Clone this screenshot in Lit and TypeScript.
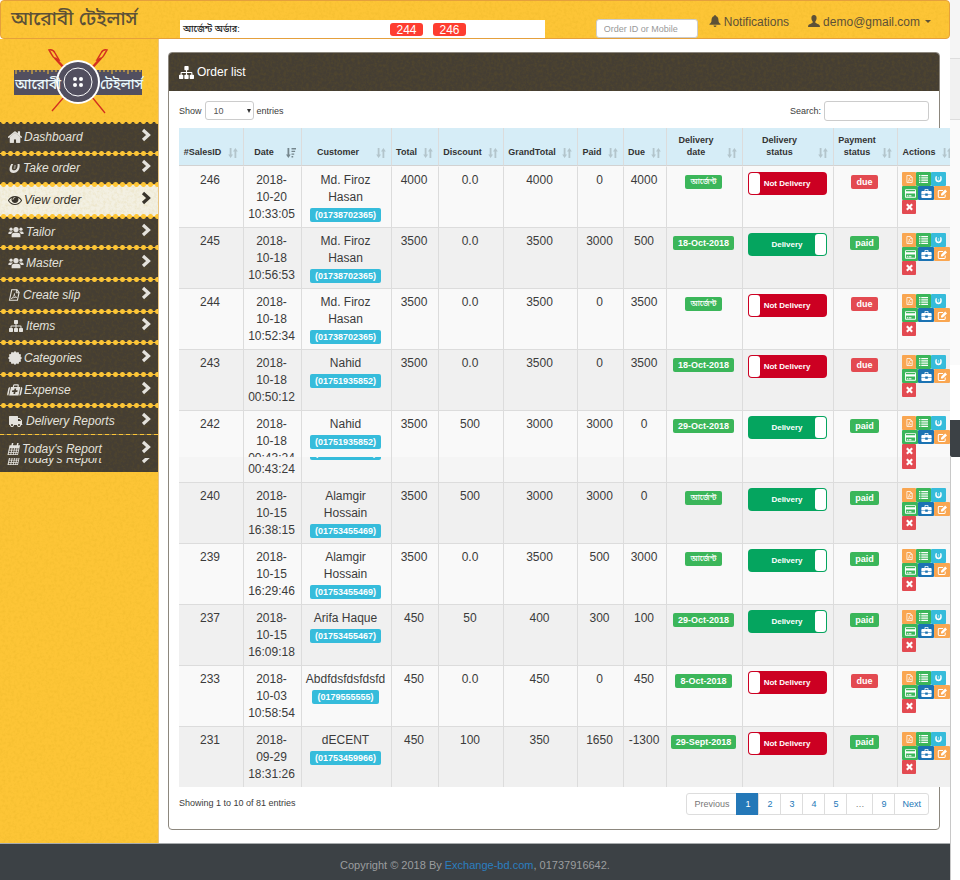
import { LitElement, html, svg, css, nothing } from "lit";
import type { TemplateResult } from "lit";
import { customElement } from "lit/decorators.js";
import { classMap } from "lit/directives/class-map.js";

interface Order {
  id: number;
  date: string[];
  name: string;
  phone: string;
  total: string;
  discount: string;
  grand: string;
  paid: string;
  due: string;
  delivery: string;
  delivered: boolean;
  settled: boolean;
  split?: boolean;
}

const URGENT = "আর্জেন্ট";

const ORDERS: Order[] = [
  { id: 246, date: ["2018-", "10-20", "10:33:05"], name: "Md. Firoz Hasan", phone: "01738702365", total: "4000", discount: "0.0", grand: "4000", paid: "0", due: "4000", delivery: URGENT, delivered: false, settled: false },
  { id: 245, date: ["2018-", "10-18", "10:56:53"], name: "Md. Firoz Hasan", phone: "01738702365", total: "3500", discount: "0.0", grand: "3500", paid: "3000", due: "500", delivery: "18-Oct-2018", delivered: true, settled: true },
  { id: 244, date: ["2018-", "10-18", "10:52:34"], name: "Md. Firoz Hasan", phone: "01738702365", total: "3500", discount: "0.0", grand: "3500", paid: "0", due: "3500", delivery: URGENT, delivered: false, settled: false },
  { id: 243, date: ["2018-", "10-18", "00:50:12"], name: "Nahid", phone: "01751935852", total: "3500", discount: "0.0", grand: "3500", paid: "0", due: "3500", delivery: "18-Oct-2018", delivered: false, settled: false },
  { id: 242, date: ["2018-", "10-18", "00:43:24"], name: "Nahid", phone: "01751935852", total: "3500", discount: "500", grand: "3000", paid: "3000", due: "0", delivery: "29-Oct-2018", delivered: true, settled: true, split: true },
  { id: 240, date: ["2018-", "10-15", "16:38:15"], name: "Alamgir Hossain", phone: "01753455469", total: "3500", discount: "500", grand: "3000", paid: "3000", due: "0", delivery: URGENT, delivered: true, settled: true },
  { id: 239, date: ["2018-", "10-15", "16:29:46"], name: "Alamgir Hossain", phone: "01753455469", total: "3500", discount: "0.0", grand: "3500", paid: "500", due: "3000", delivery: URGENT, delivered: true, settled: true },
  { id: 237, date: ["2018-", "10-15", "16:09:18"], name: "Arifa Haque", phone: "01753455467", total: "450", discount: "50", grand: "400", paid: "300", due: "100", delivery: "29-Oct-2018", delivered: true, settled: true },
  { id: 233, date: ["2018-", "10-03", "10:58:54"], name: "Abdfdsfdsfdsfd", phone: "0179555555", total: "450", discount: "0.0", grand: "450", paid: "0", due: "450", delivery: "8-Oct-2018", delivered: false, settled: false },
  { id: 231, date: ["2018-", "09-29", "18:31:26"], name: "dECENT", phone: "01753459966", total: "450", discount: "100", grand: "350", paid: "1650", due: "-1300", delivery: "29-Sept-2018", delivered: false, settled: true },
];

const COLUMNS: [string, number][] = [
  ["#SalesID", 64], ["Date", 58], ["Customer", 90], ["Total", 47], ["Discount", 65], ["GrandTotal", 74],
  ["Paid", 46], ["Due", 43], ["Delivery date", 76], ["Delivery status", 91], ["Payment status", 64], ["Actions", 60],
];

const scallop = (): string => {
  const pts: string[] = [];
  for (let i = 0; i < 24; i++) {
    const r = i % 2 ? 6.6 : 8;
    const a = (Math.PI * i) / 12;
    pts.push(`${(8 + r * Math.cos(a)).toFixed(2)},${(8 + r * Math.sin(a)).toFixed(2)}`);
  }
  return pts.join(" ");
};

const ICONS: Record<string, { box: string; body: TemplateResult }> = {
  home: { box: "100 100 1592 1592", body: svg`<path d="M1472 992v480q0 26-19 45t-45 19h-384v-384h-256v384h-384q-26 0-45-19t-19-45v-480q0-1 .5-3t.5-3l575-474 575 474q1 2 1 6zm223-69l-62 74q-8 9-21 11h-3q-13 0-21-7l-692-577-692 577q-12 8-24 7-13-2-21-11l-62-74q-8-10-7-23.500t11-21.500l719-599q32-26 76-26t76 26l244 204v-195q0-14 9-23t23-9h192q14 0 23 9t9 23v408l219 182q10 8 11 21.500t-7 23.500z"/><path d="M896 420L300 900v640h450v-400h292v400h450V900z"/>` },
  eye: { box: "0 0 1792 1792", body: svg`<path d="M1664 960q-152-236-381-353 61 104 61 225 0 185-131.500 316.500t-316.500 131.500-316.500-131.500-131.500-316.500q0-121 61-225-229 117-381 353 133 205 333.500 326.500t434.500 121.500 434.500-121.500 333.500-326.500zm-720-384q0-20-14-34t-34-14q-125 0-214.500 89.500t-89.500 214.500q0 20 14 34t34 14 34-14 14-34q0-86 61-147t147-61q20 0 34-14t14-34zm848 384q0 34-20 69-140 230-376.500 368.500t-499.500 138.500-499.500-139-376.500-368q-20-35-20-69t20-69q140-229 376.500-368t499.500-139 499.500 139 376.500 368q20 35 20 69z"/>` },
  users: { box: "0 0 20 16", body: svg`<circle cx="10" cy="5" r="3.300"/><circle cx="3.800" cy="4.500" r="2"/><circle cx="16.200" cy="4.500" r="2"/><path d="M4.500 14.500v-2Q4.500 9 8 9h4q3.500 0 3.500 3.500v2zM.5 10.500V9.300Q.5 7.300 2.500 7.300h2.600q.8 0 1.300.5-2.100 1-2.500 2.700zM19.500 10.500V9.300q0-2-2-2h-2.600q-.8 0-1.300.5 2.100 1 2.500 2.700z"/>` },
  sitemap: { box: "0 0 1792 1792", body: svg`<path d="M1792 1248v320q0 40-28 68t-68 28h-320q-40 0-68-28t-28-68v-320q0-40 28-68t68-28h96v-192h-512v192h96q40 0 68 28t28 68v320q0 40-28 68t-68 28h-320q-40 0-68-28t-28-68v-320q0-40 28-68t68-28h96v-192h-512v192h96q40 0 68 28t28 68v320q0 40-28 68t-68 28h-320q-40 0-68-28t-28-68v-320q0-40 28-68t68-28h96v-192q0-52 38-90t90-38h512v-192h-96q-40 0-68-28t-28-68v-320q0-40 28-68t68-28h320q40 0 68 28t28 68v320q0 40-28 68t-68 28h-96v192h512q52 0 90 38t38 90v192h96q40 0 68 28t28 68z"/>` },
  truck: { box: "0 0 1792 1792", body: svg`<path transform="translate(1792 0) scale(-1 1)" d="M640 1408q0-52-38-90t-90-38-90 38-38 90 38 90 90 38 90-38 38-90zm-384-512h384v-256h-158q-13 0-22 9l-195 195q-9 9-9 22v30zm1280 512q0-52-38-90t-90-38-90 38-38 90 38 90 90 38 90-38 38-90zm256-1088v1024q0 15-4 26.500t-13.500 18.500-16.500 11.500-23.500 6-22.500 2-25.500 0-22.500-.5q0 106-75 181t-181 75-181-75-75-181h-384q0 106-75 181t-181 75-181-75-75-181h-64q-3 0-22.500.5t-25.500 0-22.500-2-23.500-6-16.500-11.500-13.500-18.500-4-26.500q0-26 19-45t45-19v-320q0-8-.5-35t0-38 2.500-34.500 6.500-37 14-30.500 22.500-30l198-198q19-19 50.500-32t58.500-13h160v-192q0-26 19-45t45-19h1024q26 0 45 19t19 45z"/>` },
  horseshoe: { box: "0 0 16 16", body: svg`<path d="M2.500 2.500h2.600C3.800 6 4 11 8 11s4.200-5 2.900-8.500h2.600C16 8.500 14 14.500 8 14.500S0 8.500 2.500 2.500z"/><path d="M6.800 4h2.400v5.200H6.800z" opacity=".45"/>` },
  pdf: { box: "0 0 14 16", body: svg`<path d="M1.800 1h7l3.600 3.600V15H1.800z" fill="none" stroke="currentColor" stroke-width="1.500"/><path d="M8.500 1v4h4" fill="none" stroke="currentColor" stroke-width="1.200"/><path d="M3.600 12.800C5.500 11.500 7 8.500 6.500 6c.3 3 2 5 4.200 5.200-2.500-.3-5 .4-7.100 1.600z" fill="none" stroke="currentColor"/>` },
  badge: { box: "0 0 16 16", body: svg`<polygon points=${scallop()} />` },
  medkit: { box: "0 0 18 16", body: svg`<path d="M6 4V2.500Q6 1.500 7 1.500h4q1 0 1 1V4" fill="none" stroke="currentColor" stroke-width="1.500"/><path d="M0 6q0-2 2-2v11q-2 0-2-2zM18 6q0-2-2-2v11q2 0 2-2z"/><path fill-rule="evenodd" d="M3 4h12v11H3zM8 6v2.300H5.700v2.400H8V13h2.200v-2.300h2.300V8.300h-2.300V6z"/>` },
  calendar: { box: "0 0 16 16", body: svg`<path fill-rule="evenodd" d="M1 3h14v13H1zM2.400 7v2h2.200V7zm3.400 0v2H8V7zm3.300 0v2h2V7zm3.200 0v2h1.600V7zM2.400 10v2h2.200v-2zm3.400 0v2H8v-2zm3.300 0v2h2v-2zm3.200 0v2h1.600v-2zM2.400 13v2h2.200v-2zm3.400 0v2H8v-2zm3.300 0v2h2v-2zm3.200 0v2h1.600v-2z"/><path d="M3.500 0h2v4h-2zM10.500 0h2v4h-2z"/>` },
  chevron: { box: "0 0 10 12", body: svg`<path d="M2 1l5.500 5L2 11" fill="none" stroke="currentColor" stroke-width="3.200"/>` },
  bell: { box: "0 0 12 13", body: svg`<path d="M6 0q1 0 1 1.200C9.300 1.800 9.700 4 9.800 6c.1 2 .7 2.800 2.200 3.800v.7H0v-.7C1.500 8.800 2.100 8 2.200 6 2.300 4 2.700 1.800 5 1.200 5 0 6 0 6 0zM4.300 11.300h3.400Q7.300 13 6 13t-1.700-1.700z"/>` },
  user: { box: "0 0 13 13", body: svg`<path d="M6.500 0C8.500 0 9.400 1.400 9.300 3.400 9.200 5 8.800 6 8 6.900v1.400c.7.900 4.300 1.300 4.700 3.200l.3 1.500H0l.3-1.500c.4-1.900 4-2.300 4.700-3.200V6.900C4.200 6 3.800 5 3.700 3.400 3.600 1.400 4.500 0 6.500 0z"/>` },
  list: { box: "0 0 16 14", body: svg`<path d="M0 0h2.500v2H0zM4 0h12v2H4zM0 4h2.500v2H0zM4 4h12v2H4zM0 8h2.500v2H0zM4 8h12v2H4zM0 12h2.500v2H0zM4 12h12v2H4z"/>` },
  card: { box: "0 0 18 14", body: svg`<path fill-rule="evenodd" d="M1.500 0h15Q18 0 18 1.500v11q0 1.500-1.500 1.500h-15Q0 14 0 12.500v-11Q0 0 1.500 0zM1.500 1.400v2h15v-2zM1.500 7v5.500h15V7zM3 10h2.500v1.500H3zm3.500 0h4v1.500h-4z"/>` },
  briefcase: { box: "0 0 16 14", body: svg`<path fill-rule="evenodd" d="M5 3V1.200Q5 0 6.200 0h3.600Q11 0 11 1.200V3h3.500Q16 3 16 4.500V8h-6V7H6v1H0V4.500Q0 3 1.500 3zM6.300 3h3.400V1.300H6.300zM0 9h6v1.500h4V9h6v3.500q0 1.500-1.500 1.500h-13Q0 14 0 12.500z"/>` },
  edit: { box: "0 0 16 15", body: svg`<path d="M12.500 9v3.500q0 1.500-1.500 1.500H2.500Q1 14 1 12.500V4q0-1.500 1.500-1.500H9" fill="none" stroke="currentColor" stroke-width="1.700"/><path d="M5.500 8l7-7L15.500 4l-7 7h-3z"/>` },
  cross: { box: "0 0 12 12", body: svg`<path d="M2 2l8 8M10 2l-8 8" stroke="currentColor" stroke-width="3.200"/>` },
  sort: { box: "0 0 10 10", body: svg`<path d="M1.700 0h1.800v6.500H5L2.600 10 .2 6.500h1.500zM6.500 10h1.800V3.500h1.500L7.400 0 5 3.500h1.500z"/>` },
  sorted: { box: "0 0 10 10", body: svg`<path d="M1.500 0h1.800v6.500h1.400L2.400 10 0 6.500h1.500zM5.500 0H10v1.400H5.500zM5.500 2.700h3.600v1.400H5.500zM5.500 5.400h2.700v1.400H5.500zM5.500 8.100h1.700v1.400H5.500z"/>` },
};

const icon = (name: string, extra = "") =>
  html`<svg class="icon ${extra}" viewBox=${ICONS[name].box} fill="currentColor" aria-hidden="true">${ICONS[name].body}</svg>`;

const MENU: [string, string, string][] = [
  ["home", "Dashboard", ""],
  ["horseshoe", "Take order", "lean narrow"],
  ["eye", "View order", ""],
  ["users", "Tailor", "wide"],
  ["users", "Master", "wide"],
  ["pdf", "Create slip", "lean narrow"],
  ["sitemap", "Items", "wide"],
  ["badge", "Categories", ""],
  ["medkit", "Expense", "lean"],
  ["truck", "Delivery Reports", "wide"],
];

const ACTIONS: [string, string, string][] = [
  ["pdf", "orange small", "Slip"],
  ["list", "green", "Details"],
  ["horseshoe", "cyan", "Measurements"],
  ["card", "green wide", "Payment"],
  ["briefcase", "blue wide", "Items"],
  ["edit", "orange wide", "Edit"],
  ["cross", "red small", "Delete"],
];

@customElement("app-root")
export class AppRoot extends LitElement {
  static styles = css`
    :host {
      --yellow: #fdc536;
      --dark: #453e33;
      --grain: url("data:image/svg+xml,%3Csvg xmlns='http://www.w3.org/2000/svg' width='160' height='160'%3E%3Cfilter id='n'%3E%3CfeTurbulence type='fractalNoise' baseFrequency='.35' numOctaves='3' stitchTiles='stitch'/%3E%3CfeColorMatrix values='0 0 0 0 .45 0 0 0 0 .25 0 0 0 0 0 0 0 0 .5 -.2'/%3E%3C/filter%3E%3Crect width='160' height='160' filter='url(%23n)' opacity='.45'/%3E%3C/svg%3E");
      display: block;
      font-family: "Liberation Sans", "Noto Sans Bengali", "Lohit Bengali", sans-serif;
      color: #3b3b3b;
      font-size: 12px;
    }
    * { box-sizing: border-box; }
    a { text-decoration: none; color: inherit; }
    .icon { display: block; width: 12px; height: 12px; flex: none; overflow: visible; }
    .shell { display: flex; background: #fff; min-height: 100vh; }
    .page { flex: 1; min-width: 0; display: flex; flex-direction: column; overflow: hidden; }

    .topbar { height: 39px; display: flex; align-items: flex-end; border: 1px solid #e5a03c; border-radius: 4px; background: var(--grain) var(--yellow); color: #5d5137; }
    .brand { width: 179px; padding-left: 10px; align-self: flex-start; font-size: 19px; line-height: 36px; font-weight: 500; white-space: nowrap; }
    .urgent { flex: 0 1 365px; height: 18px; display: flex; align-items: center; background: #fff; color: #222; font-size: 9px; font-weight: 500; }
    .urgent-label { width: 210px; padding-left: 3px; white-space: nowrap; line-height: 18px; }
    .pill { width: 33px; height: 13px; line-height: 14px; margin-right: 10px; border-radius: 3px; background: #fe3d30; color: #fff; font-weight: 400; font-size: 12px; text-align: center; }
    .find { margin-left: auto; width: 102px; height: 19px; border: 1px solid #ccc; border-radius: 3px; padding: 0 7px; font: 9px "Liberation Sans", sans-serif; background: #fff; }
    .find::placeholder { color: #999; }
    .topnav { display: flex; align-self: stretch; align-items: center; gap: 19px; padding: 4px 18px 0 11px; }
    .topnav a { display: flex; align-items: center; gap: 3px; line-height: 16px; }
    .topnav .icon { margin-bottom: 2px; }
    .caret { border: 3px solid transparent; border-top-color: currentColor; border-bottom: 0; margin-left: 2px; }

    .middle { flex: 1; display: flex; }
    .sidebar { width: 159px; flex: none; background: var(--grain) var(--yellow); border-right: 1px solid #e9c583; }
    .logo { display: block; width: 158px; height: 82px; }
    .logo-text { font-size: 14px; font-weight: 500; fill: #e9f7fb; }
    .menu { list-style: none; margin: 0; padding: 0; font-style: italic; color: #e4e2dd; }
    .menu-main { height: 316px; display: grid; grid-auto-rows: 1fr; }
    .menu li { position: relative; background: var(--grain) var(--dark); }
    .menu li::before { content: ""; position: absolute; left: 0; right: 0; top: -2px; height: 5px; background: radial-gradient(circle at center, var(--yellow) 2px, transparent 3px) 0 0 / 7px 5px, linear-gradient(var(--yellow), var(--yellow)) 0 2px / 100% 1px no-repeat; }
    .menu li.active { background: var(--grain) #f3f0e2; color: #39342b; }
    .menu a { display: flex; align-items: center; gap: 2px; height: 100%; padding: 0 7px 0 8px; }
    .menu .chev { margin-left: auto; margin-bottom: 4px; }
    .lean { transform: skewX(-12deg); }
    .menu .icon { width: 14px; height: 14px; }
    .menu .icon.wide { width: 16px; }
    .menu .icon.narrow { width: 13px; height: 12px; }
    .menu .icon.chev { width: 10px; height: 12px; }
    .menu li.today { margin-top: -3px; }
    .menu li.today::before { height: 1px; top: 0; background: repeating-linear-gradient(90deg, var(--yellow) 0 4px, #857444 4px 7px); }
    .today .icon { width: 12px; height: 12px; }
    .today-top { height: 24px; overflow: hidden; }
    .today-top a { height: 30px; }
    .today-rest { height: 14px; overflow: hidden; display: flex; flex-direction: column; justify-content: flex-end; }
    .today-rest a { height: 26px; flex: none; }

    .content { flex: 1; min-width: 0; padding: 13px 10px 13px 9px; }
    .panel { border: 1px solid #8c877e; border-radius: 4px; }
    .panel-head { display: flex; align-items: center; gap: 3px; height: 38px; margin: 0; padding: 0 10px; background: var(--grain) var(--dark); color: #fff; border-radius: 3px 3px 0 0; font-size: 12px; font-weight: 400; }
    .panel-head .icon { width: 15px; height: 15px; }
    .panel-body { padding: 0 10px 14px; font-size: 9px; }
    .tools { display: flex; justify-content: space-between; align-items: center; height: 37px; padding-top: 2px; }
    .tools label { display: flex; align-items: center; gap: 3px; }
    .length { width: 49px; height: 19px; margin: 0; border: 1px solid #ccc; border-radius: 3px; background: #fff; color: #555; font: 9px "Liberation Sans", sans-serif; padding: 0 3px 0 8px; appearance: none; }
    .select { position: relative; display: block; }
    .select::after { content: ""; position: absolute; right: 3px; top: 8px; border: 2px solid transparent; border-top: 4px solid #333; border-bottom: 0; }
    .search { width: 105px; height: 20px; margin: 0; border: 1px solid #ccc; border-radius: 3px; font: 9px "Liberation Sans", sans-serif; }

    table { position: relative; width: calc(100% + 28px); table-layout: fixed; border-collapse: separate; border-spacing: 0; text-align: center; }
    th { position: relative; height: 38px; padding: 0 20px 7px 3px; vertical-align: bottom; background: #d6edf7; border-left: 1px solid #dcdcdc; border-bottom: 1px solid #d2d2d2; font-size: 9px; line-height: 12px; color: #333; }
    th .icon { position: absolute; right: 5px; bottom: 7px; width: 10px; height: 10px; color: #b3c5cc; }
    th .icon.on { color: #75868d; }
    td { padding: 5px 5px 4px 3px; vertical-align: top; border-left: 1px solid #dcdcdc; border-top: 1px solid #dcdcdc; font-size: 12px; line-height: 17px; background: #f9f9f9; }
    tbody tr:first-child td { border-top-color: transparent; }
    th:first-child, td:first-child { border-left: 0; }
    tr.odd td { background: #f0f0f0; }
    .line { display: block; white-space: nowrap; }
    .tag { display: inline-block; height: 14px; padding: 0 5px; border-radius: 2px; font-size: 9px; line-height: 14px; font-weight: 700; color: #fff; background: #3bb65a; vertical-align: middle; white-space: nowrap; }
    .tag.bn { font-size: 8px; font-weight: 500; line-height: 13px; }
    .tag.phone { background: #36bcdb; }
    .tag.due { background: #e34a51; }
    .center { display: flex; justify-content: center; padding-top: 3px; }
    .toggle { position: relative; display: flex; align-items: center; justify-content: center; width: 79px; height: 23px; border-radius: 4px; background: #cc0022; color: #fff; font-size: 8px; font-weight: 700; margin: 0 auto; }
    .toggle.yes { background: #05a55f; }
    .toggle input { position: absolute; inset: 0; margin: 0; opacity: 0; }
    .knob { position: absolute; left: 1px; top: 1px; width: 11px; height: 21px; border-radius: 3px; background: #fff; }
    .yes .knob { left: auto; right: 1px; }
    .acts, .acts .top, .acts .rest { padding-left: 4px; }
    .actions { display: flex; flex-wrap: wrap; width: 49px; }
    .act { width: 15px; height: 14px; padding: 0; border: 0; display: flex; align-items: center; justify-content: center; color: #fff; border-radius: 1px; }
    .act .icon { width: 9px; height: 8px; }
    .act.wide .icon { width: 11px; height: 9px; }
    .act.small { width: 14px; }
    .act.wide { width: 16px; }
    .act:nth-child(3) { margin-right: 4px; }
    .orange { background: #f9a651; }
    .green { background: #3bb65a; }
    .cyan { background: #36bcdb; }
    .blue { background: #1b73b3; }
    .red { background: #e34a51; }
    tr.split td { padding: 0; }
    .top { height: 46px; overflow: hidden; padding: 5px 5px 0 3px; }
    .rest { height: 25px; overflow: hidden; padding: 0 5px 0 3px; display: flex; flex-direction: column; justify-content: flex-end; background: #f5f5f5; }
    .rest .whole { flex: none; height: 55px; }

    .foot { display: flex; justify-content: space-between; padding-top: 6px; line-height: 20px; }
    .pages { display: flex; list-style: none; margin: 0; padding: 0; }
    .pages a, .pages span { display: block; height: 22px; margin-left: -1px; padding: 0 8px; border: 1px solid #ddd; color: #2478b8; }
    .pages .end a { padding: 0 7px; }
    .pages .muted { color: #777; }
    .pages .current { background: #2478b8; border-color: #2478b8; color: #fff; }
    .pages li:first-child > * { border-radius: 3px 0 0 3px; }
    .pages li:last-child > * { border-radius: 0 3px 3px 0; }

    footer { height: 37px; background: #3c4145; color: #9b9d9f; font-size: 11px; line-height: 42px; text-align: center; border-top: 1px solid #a8abad; }
    footer a { color: #2b7fc0; }

    .edge { width: 10px; flex: none; display: flex; flex-direction: column; background: #f9f9f9; }
    .edge-a { height: 59px; background: #f5f5f5; border-bottom: 1px solid #ddd; }
    .edge-b { height: 61px; background: #f1f1f1; border-bottom: 1px solid #ddd; }
    .edge-c { height: 245px; background: #fafafa; }
    .edge-d { height: 55px; background: #fff; }
    .edge-tab { height: 37px; background: #3c4145; border-radius: 0 0 0 2px; }
    .edge-e { flex: 1; background: #fff; border-left: 1px solid #c8c8c8; }
  `;

  private cells(o: Order, copy: boolean): TemplateResult[] {
    return [
      html`${o.id}`,
      html`${o.date.map((d) => html`<span class="line">${d}</span>`)}`,
      html`${o.name}<span class="line"><span class="tag phone">(${o.phone})</span></span>`,
      html`${o.total}`,
      html`${o.discount}`,
      html`${o.grand}`,
      html`${o.paid}`,
      html`${o.due}`,
      html`<div class="center"><span class="tag ${o.delivery === URGENT ? "bn" : ""}">${o.delivery}</span></div>`,
      html`<label class=${classMap({ toggle: true, yes: o.delivered })}>
        <input type="checkbox" ?checked=${o.delivered} ?disabled=${copy} /><span>${o.delivered ? "Delivery" : "Not Delivery"}</span><span class="knob"></span></label>`,
      html`<div class="center"><span class="tag ${o.settled ? "" : "due"}">${o.settled ? "paid" : "due"}</span></div>`,
      html`<div class="actions">${ACTIONS.map(([name, tone, label]) => html`<button type="button" class="act ${tone}" aria-label=${label} ?disabled=${copy}>${icon(name)}</button>`)}</div>`,
    ];
  }

  private row(o: Order, i: number) {
    const first = this.cells(o, false);
    const again = o.split ? this.cells(o, true) : [];
    return html`<tr class=${classMap({ odd: i % 2 === 1, split: !!o.split })}>
      ${first.map((c, n) => html`<td class=${n === 11 ? "acts" : ""}>${o.split
        ? html`<div class="top">${c}</div><div class="rest" aria-hidden="true"><div class="whole">${again[n]}</div></div>`
        : c}</td>`)}
    </tr>`;
  }

  private heading(name: string) {
    const [head, tail] = name.split(" ");
    return html`<th scope="col">${head}${tail ? html`<br />${tail}` : nothing}${name === "Date" ? icon("sorted", "on") : icon("sort")}</th>`;
  }

  private logo() {
    const ticks = Array.from({ length: 32 }, (_, i) => 16 + i * 4);
    return html`<svg class="logo" viewBox="0 39 158 82" role="img" aria-label="আরোবী টেইলার্স">
      <g stroke="#d3301f" fill="none">
        <path d="M55 58l10 11M101 58L91 69" stroke-width="2.500" />
        <path d="M92 97l13 16M64 97l-12 14" stroke-width="1.300" />
        <path d="M49 50q4-1 6 3l4 7q-5-1-7-5z" stroke-width="1.500" /><path d="M107 50q-4-1-6 3l-4 7q5-1 7-5z" stroke-width="1.500" />
      </g>
      <rect x="14" y="70" width="128" height="25" fill="#524f5f" />
      ${ticks.map((x) => svg`<path d="M${x} 70v${x % 16 ? 2 : 4}" stroke="#fdc536" />`)}
      <circle cx="78" cy="82" r="22" fill="#fff" /><circle cx="78" cy="82" r="20" fill="#524f5f" />
      <circle cx="78" cy="82" r="14" fill="none" stroke="#fff" />
      <circle cx="75" cy="79" r="2" fill="#fff" /><circle cx="81" cy="79" r="2" fill="#fff" />
      <circle cx="75" cy="85" r="2" fill="#fff" /><circle cx="81" cy="85" r="2" fill="#fff" />
      <text class="logo-text" x="15" y="89">আরোবী</text>
      <text class="logo-text" x="100" y="89">টেইলার্স</text>
    </svg>`;
  }

  private today(copy: boolean) {
    return html`<a href="#today" tabindex=${copy ? -1 : 0}>${icon("calendar", "lean")}<span>Today's Report</span>${icon("chevron", "chev")}</a>`;
  }

  render() {
    return html`<div class="shell">
      <div class="page">
        <header class="topbar">
          <a class="brand" href="#home">আরোবী টেইলার্স</a>
          <div class="urgent"><span class="urgent-label">আর্জেন্ট অর্ডার:</span><a class="pill" href="#244">244</a><a class="pill" href="#246">246</a></div>
          <input class="find" type="text" placeholder="Order ID or Mobile" aria-label="Order ID or Mobile" />
          <nav class="topnav">
            <a href="#notifications">${icon("bell")}Notifications</a>
            <a href="#account">${icon("user")}demo@gmail.com<span class="caret"></span></a>
          </nav>
        </header>
        <div class="middle">
          <nav class="sidebar">
            ${this.logo()}
            <ul class="menu menu-main">
              ${MENU.map(([name, label, mod]) => html`<li class=${label === "View order" ? "active" : ""}><a href="#menu">${icon(name, mod)}<span>${label}</span>${icon("chevron", "chev")}</a></li>`)}
            </ul>
            <ul class="menu">
              <li class="today"><div class="today-top">${this.today(false)}</div><div class="today-rest" aria-hidden="true">${this.today(true)}</div></li>
            </ul>
          </nav>
          <main class="content">
            <section class="panel">
              <h1 class="panel-head">${icon("sitemap")}Order list</h1>
              <div class="panel-body">
                <div class="tools">
                  <label>Show <span class="select"><select class="length"><option>10</option><option>25</option><option>50</option></select></span> entries</label>
                  <label>Search: <input class="search" type="search" /></label>
                </div>
                <table>
                  <colgroup>${COLUMNS.map(([, w]) => html`<col width=${w} />`)}</colgroup>
                  <thead><tr>${COLUMNS.map(([c]) => this.heading(c))}</tr></thead>
                  <tbody>${ORDERS.map((o, i) => this.row(o, i))}</tbody>
                </table>
                <div class="foot">
                  <span>Showing 1 to 10 of 81 entries</span>
                  <ul class="pages">
                    <li class="end"><a class="muted" href="#prev">Previous</a></li>
                    ${["1", "2", "3", "4", "5", "…", "9"].map((p) => html`<li>${p === "…" ? html`<span class="muted">${p}</span>` : html`<a class=${p === "1" ? "current" : ""} href="#page" aria-current=${p === "1" ? "page" : nothing}>${p}</a>`}</li>`)}
                    <li class="end"><a href="#next">Next</a></li>
                  </ul>
                </div>
              </div>
            </section>
          </main>
        </div>
        <footer>Copyright © 2018 By <a href="#exchange">Exchange-bd.com</a>, 01737916642.</footer>
      </div>
      <div class="edge" aria-hidden="true">
        <div class="edge-a"></div><div class="edge-b"></div><div class="edge-c"></div><div class="edge-d"></div><div class="edge-tab"></div><div class="edge-e"></div>
      </div>
    </div>`;
  }
}
